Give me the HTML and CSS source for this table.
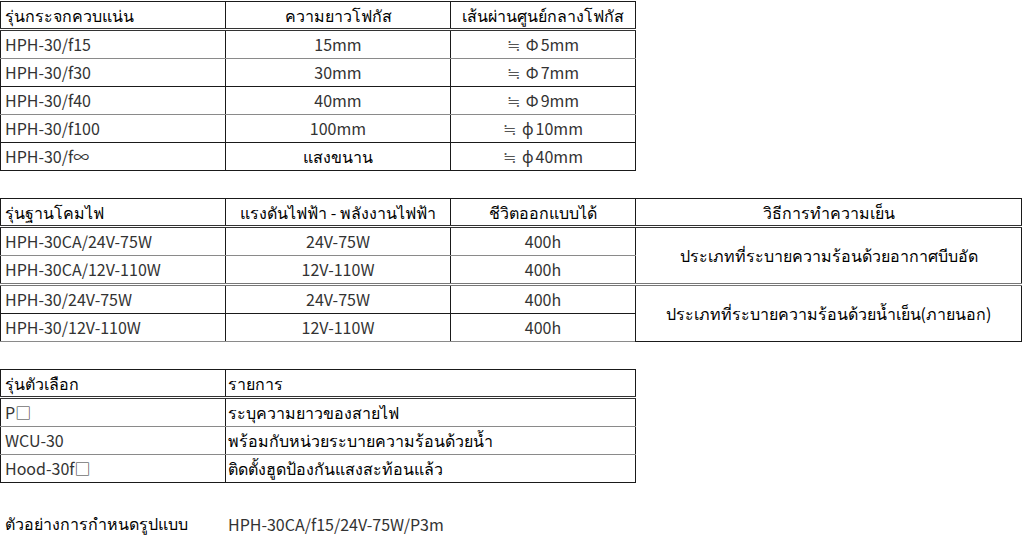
FILE: index.html
```html
<!DOCTYPE html>
<html lang="th">
<head>
<meta charset="utf-8">
<title>HPH-30</title>
<link rel="stylesheet" href="styles.css">
</head>
<body>
<table class="grid t1">
  <colgroup><col class="c225"><col class="c225"><col class="c185"></colgroup>
  <tr class="head">
    <th class="left">รุ่นกระจกควบแน่น</th>
    <th>ความยาวโฟกัส</th>
    <th>เส้นผ่านศูนย์กลางโฟกัส</th>
  </tr>
  <tr class="light">
    <td class="left">HPH-30/f15</td><td>15mm</td><td><span class="approx">≒</span><span class="phi">Φ</span>5mm</td>
  </tr>
  <tr class="dark">
    <td class="left">HPH-30/f30</td><td>30mm</td><td><span class="approx">≒</span><span class="phi">Φ</span>7mm</td>
  </tr>
  <tr class="light">
    <td class="left">HPH-30/f40</td><td>40mm</td><td><span class="approx">≒</span><span class="phi">Φ</span>9mm</td>
  </tr>
  <tr class="dark">
    <td class="left">HPH-30/f100</td><td>100mm</td><td><span class="approx">≒</span><span class="phi">ϕ</span>10mm</td>
  </tr>
  <tr class="dark">
    <td class="left">HPH-30/f∞</td><td class="thai">แสงขนาน</td><td><span class="approx">≒</span><span class="phi">ϕ</span>40mm</td>
  </tr>
</table>

<table class="grid t2">
  <colgroup><col class="c225"><col class="c225"><col class="c185"><col class="c386"></colgroup>
  <tr class="head">
    <th class="left">รุ่นฐานโคมไฟ</th>
    <th>แรงดันไฟฟ้า - พลังงานไฟฟ้า</th>
    <th>ชีวิตออกแบบได้</th>
    <th>วิธีการทำความเย็น</th>
  </tr>
  <tr class="light">
    <td class="left">HPH-30CA/24V-75W</td><td>24V-75W</td><td>400h</td>
    <td rowspan="2" class="merged">ประเภทที่ระบายความร้อนด้วยอากาศบีบอัด</td>
  </tr>
  <tr class="double">
    <td class="left">HPH-30CA/12V-110W</td><td>12V-110W</td><td>400h</td>
  </tr>
  <tr class="dark">
    <td class="left">HPH-30/24V-75W</td><td>24V-75W</td><td>400h</td>
    <td rowspan="2" class="merged">ประเภทที่ระบายความร้อนด้วยน้ำเย็น(ภายนอก)</td>
  </tr>
  <tr class="light">
    <td class="left">HPH-30/12V-110W</td><td>12V-110W</td><td>400h</td>
  </tr>
</table>

<table class="grid t3">
  <colgroup><col class="c225"><col class="c410"></colgroup>
  <tr class="head">
    <th class="left">รุ่นตัวเลือก</th>
    <th class="left2">รายการ</th>
  </tr>
  <tr class="light">
    <td class="left">P□</td><td class="left2 thai">ระบุความยาวของสายไฟ</td>
  </tr>
  <tr class="light">
    <td class="left">WCU-30</td><td class="left2 thai">พร้อมกับหน่วยระบายความร้อนด้วยน้ำ</td>
  </tr>
  <tr class="dark">
    <td class="left">Hood-30f□</td><td class="left2 thai">ติดตั้งฮูดป้องกันแสงสะท้อนแล้ว</td>
  </tr>
</table>

<div class="example">
  <span class="ex-label">ตัวอย่างการกำหนดรูปแบบ</span>
  <span class="ex-value">HPH-30CA/f15/24V-75W/P3m</span>
</div>
</body>
</html>
```

FILE: styles.css
```css
html, body {
  margin: 0;
  padding: 0;
  background: #ffffff;
}

body {
  font-family: "Noto Sans CJK JP", "Noto Sans", sans-serif;
  font-size: 16px;
  color: #333333;
}

.grid {
  border-collapse: collapse;
  table-layout: fixed;
  border: 1px solid #1a1a1a;
}

.t1 { width: 635px; margin-top: 1px; }
.t2 { width: 1021px; margin-top: 27px; }
.t3 { width: 635px; margin-top: 27px; }

.c225 { width: 225px; }
.c185 { width: 185px; }
.c386 { width: 386px; }
.c410 { width: 410px; }

.grid th,
.grid td {
  border-left: 1px solid #1a1a1a;
  border-right: 1px solid #1a1a1a;
  padding: 0 4px 2px;
  height: 25px;
  line-height: 24px;
  text-align: center;
  white-space: nowrap;
  overflow: hidden;
  font-weight: 400;
}

.grid th {
  color: #000000;
  height: 25px;
  line-height: 24px;
  padding-bottom: 1px;
}

.grid .left { text-align: left; padding-left: 4px; }
.grid .left2 { text-align: left; padding-left: 2px; }

.head th { border-bottom: 3px double #333333; }
.light td { border-bottom: 1px solid #8a8a8a; }
.dark td { border-bottom: 1px solid #1a1a1a; }
.double td { border-bottom: 3px double #777777; }

.thai { color: #000000; }

.approx {
  color: #555555;
  margin-right: 6px;
}

.phi {
  margin-right: 2px;
}

.grid .merged {
  color: #000000;
  border-bottom: 1px solid #1a1a1a;
}

.t2 tr.double .merged,
.t2 tr.light .merged { border-bottom: 3px double #777777; }

.example {
  display: flex;
  align-items: center;
  margin-top: 28px;
  padding-left: 5px;
}

.ex-label {
  width: 223px;
  color: #000000;
}

.ex-value {
  color: #333333;
}
```
